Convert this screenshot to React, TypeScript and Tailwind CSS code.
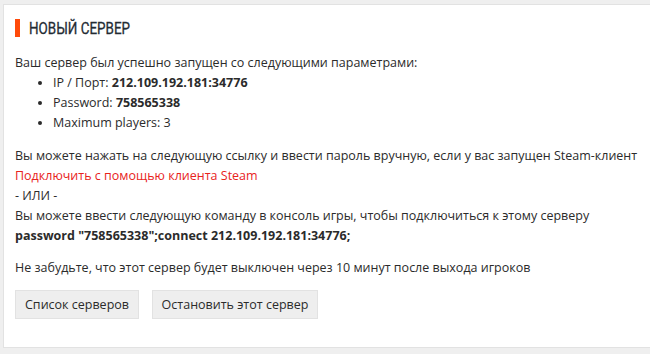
export default function App() {
  const body = { fontFamily: '"Open Sans", "Liberation Sans", sans-serif' };

  return (
    <div className="w-[650px] h-[354px] bg-[#efefef] pt-[4px] pl-[3px] overflow-hidden" style={body}>
      <div className="h-[344px] bg-white border border-[#e2e2e2] border-r-0 pl-[11px] pt-[14px] text-[12.5px] leading-[20px] text-[#2b2b2b]">
        {/* заголовок */}
        <div className="flex items-center h-[18px]">
          <span className="w-[5px] h-[18px] bg-[#ff4a0a]" />
          <span
            className="ml-[9px] text-[17px] text-[#232b33] origin-left scale-x-[0.79] whitespace-nowrap [-webkit-text-stroke:0.3px_#232b33]"
            style={{ fontFamily: '"Roboto", sans-serif' }}
          >
            НОВЫЙ СЕРВЕР
          </span>
        </div>

        <div className="mt-[16px]">
          <p>Ваш сервер был успешно запущен со следующими параметрами:</p>
          <ul className="list-disc pl-[38px]">
            <li>
              IP / Порт: <b>212.109.192.181:34776</b>
            </li>
            <li>
              Password: <b>758565338</b>
            </li>
            <li>Maximum players: 3</li>
          </ul>
        </div>

        <div className="mt-[13px] whitespace-nowrap">
          <p>Вы можете нажать на следующую ссылку и ввести пароль вручную, если у вас запущен Steam-клиент</p>
          <a className="text-[#e8231c]">Подключить с помощью клиента Steam</a>
          <p>- ИЛИ -</p>
          <p>Вы можете ввести следующую команду в консоль игры, чтобы подключиться к этому серверу</p>
          <p className="font-bold">password "758565338";connect 212.109.192.181:34776;</p>
        </div>

        <p className="mt-[12px]">Не забудьте, что этот сервер будет выключен через 10 минут после выхода игроков</p>

        <div className="flex gap-[13px] mt-[12px]">
          <button className="h-[29px] w-[124px] bg-[#eeeeee] border border-[#e2e2e2] text-[12.5px] text-[#2b2b2b]">
            Список серверов
          </button>
          <button className="h-[29px] w-[166px] bg-[#eeeeee] border border-[#e2e2e2] text-[12.5px] text-[#2b2b2b]">
            Остановить этот сервер
          </button>
        </div>
      </div>
    </div>
  );
}
